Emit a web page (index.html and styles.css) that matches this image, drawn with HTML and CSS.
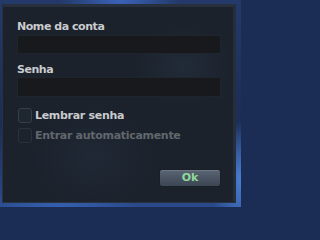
FILE: index.html
```html
<!DOCTYPE html>
<html>
<head>
<meta charset="utf-8">
<link rel="stylesheet" href="styles.css">
</head>
<body>
<div class="scene">
  <div class="panel">
    <label class="label">Nome da conta</label>
    <div class="input"></div>
    <label class="label second">Senha</label>
    <div class="input"></div>
    <div class="checks">
      <div class="check"><span class="box"></span><span class="check-text">Lembrar senha</span></div>
      <div class="check disabled"><span class="box"></span><span class="check-text">Entrar automaticamente</span></div>
    </div>
    <div class="actions"><button class="ok">Ok</button></div>
  </div>
</div>
</body>
</html>
```
FILE: styles.css
```css
html, body {
  margin: 0;
  padding: 0;
  background: #1c2d55;
}
body {
  width: 241px;
  height: 207px;
  overflow: hidden;
  font-family: "DejaVu Sans", Verdana, sans-serif;
}
.scene {
  width: 241px;
  height: 207px;
  padding: 4px 0 0 2px;
  box-sizing: border-box;
  background:
    radial-gradient(ellipse 60px 30px at 120px 0px, #3a63b8 0%, rgba(58,99,184,0) 100%),
    radial-gradient(ellipse 30px 60px at 241px 180px, #4a7fd0 0%, rgba(74,127,208,0) 100%),
    radial-gradient(ellipse 80px 20px at 60px 207px, #3560b0 0%, rgba(53,96,176,0) 100%),
    linear-gradient(180deg, #233a6a 0%, #1c2d55 60%, #2a4a8a 100%);
}
.panel {
  width: 234px;
  height: 199px;
  box-sizing: border-box;
  padding: 13px 12px 0 14px;
  border: 1px solid #28313d;
  border-top: 3px solid #27303c;
  border-right: 3px solid #252e3a;
  background:
    radial-gradient(ellipse 50px 40px at 180px 60px, rgba(45,60,80,0.35) 0%, rgba(45,60,80,0) 100%),
    radial-gradient(ellipse 60px 50px at 90px 150px, rgba(40,52,70,0.35) 0%, rgba(40,52,70,0) 100%),
    #1b222c;
  display: flex;
  flex-direction: column;
}
.label {
  display: block;
  height: 14px;
  line-height: 14px;
  font-size: 11px;
  font-weight: bold;
  letter-spacing: -0.45px;
  color: #c9cbcd;
  margin-bottom: 1px;
}
.label.second {
  margin-top: 9px;
  margin-bottom: 0;
}
.input {
  height: 19px;
  background: #17191d;
  border: 1px solid #1f252d;
  box-sizing: border-box;
}
.input + .label.second + .input {
  height: 20px;
}
.checks {
  margin-top: 11px;
  display: flex;
  flex-direction: column;
  gap: 5px;
}
.check {
  display: flex;
  align-items: center;
  height: 15px;
  margin-left: 1px;
}
.box {
  width: 14px;
  height: 15px;
  box-sizing: border-box;
  border: 1px solid #36404c;
  border-radius: 3px;
  background: #1e2630;
  margin-right: 3px;
}
.check-text {
  font-size: 11px;
  font-weight: bold;
  letter-spacing: -0.3px;
  color: #c9cbcd;
  line-height: 15px;
}
.check.disabled .check-text {
  color: #62676d;
}
.check.disabled .box {
  border-color: #2a323c;
  background: #1c232c;
}
.actions {
  display: flex;
  justify-content: flex-end;
  margin-top: 26px;
}
.ok {
  width: 62px;
  height: 18px;
  padding: 0;
  border: 1px solid #1a1f26;
  border-radius: 3px;
  background: linear-gradient(180deg, #5b6674 0%, #4a5462 50%, #3d4653 100%);
  box-shadow: inset 0 1px 0 #6c7886;
  color: #8fd99b;
  font-family: "DejaVu Sans", Verdana, sans-serif;
  font-size: 11px;
  font-weight: bold;
  line-height: 16px;
}
```
